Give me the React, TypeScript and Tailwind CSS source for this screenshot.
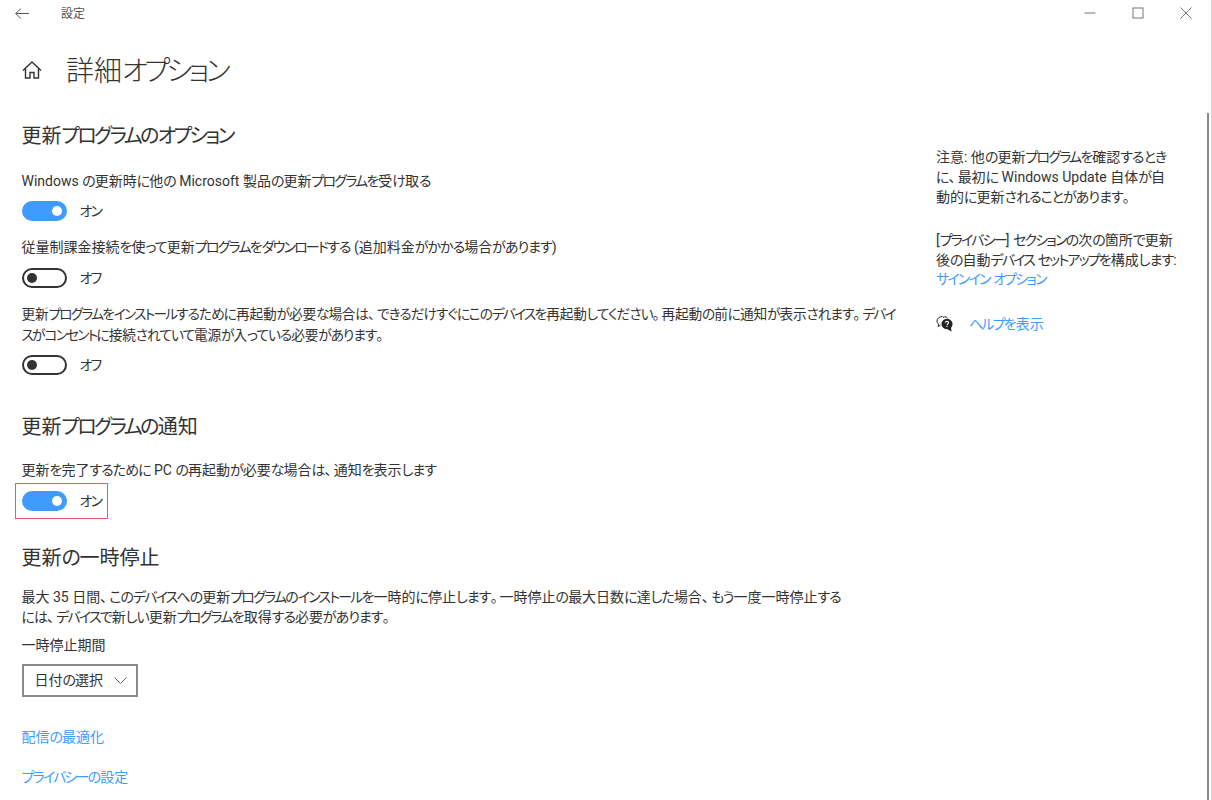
import { ReactNode } from "react";

const font = { fontFamily: 'Roboto, "Noto Sans CJK JP", sans-serif' };

// kana in the original font is narrower than Noto's, so each run gets its own tracking
function jp(text: string) {
  return text.split(/([ァ-ヶー]+|[ぁ-ん]+|[、。]+)/).map((run, i) => {
    if (/^[ァ-ヶー]/.test(run)) return <span key={i} className="tracking-[-0.13em]">{run}</span>;
    if (/^[ぁ-ん]/.test(run)) return <span key={i} className="tracking-[-0.07em]">{run}</span>;
    if (/^[、。]/.test(run)) return <span key={i} className="tracking-[0.15em]">{run}</span>;
    return run;
  });
}

function Toggle({ on, highlight }: { on: boolean; highlight?: boolean }) {
  return (
    <div className="relative flex h-[20px] items-center">
      {on ? (
        <div className="flex h-[20px] w-[45px] items-center justify-end rounded-full bg-[#3f9bff] pr-[5px]">
          <div className="h-[10px] w-[10px] rounded-full bg-white" />
        </div>
      ) : (
        <div className="flex h-[20px] w-[45px] items-center rounded-full border-2 border-[#333] pl-[3px]">
          <div className="h-[10px] w-[10px] rounded-full bg-[#333]" />
        </div>
      )}
      <span className="ml-[13px] text-[14px] leading-[20px] text-[#333]">{jp(on ? "オン" : "オフ")}</span>
      {highlight && (
        <div className="absolute left-[-7px] top-[-8px] h-[36px] w-[93px] border border-[#f0575c]" />
      )}
    </div>
  );
}

function Heading({ children, className }: { children: string; className: string }) {
  return <h2 className={`text-[20px] leading-[26px] text-[#333] ${className}`}>{jp(children)}</h2>;
}

function Label({ children, className }: { children: string; className: string }) {
  return <p className={`whitespace-pre-line text-[14px] leading-[20px] text-[#333] ${className}`}>{jp(children)}</p>;
}

function Link({ children, className }: { children: string; className: string }): ReactNode {
  return <p className={`text-[14px] leading-[20px] text-[#3f9bff] ${className}`}>{jp(children)}</p>;
}

export default function App() {
  return (
    <div className="h-[800px] w-[1212px] overflow-hidden border-r border-[#d4d4d4] bg-white [font-feature-settings:'palt']" style={font}>
      {/* title bar */}
      <div className="flex h-[26px] items-center text-[#666]">
        <svg className="ml-[15px] h-[11px] w-[14px]" viewBox="0 0 14 11" fill="none" stroke="#555" strokeWidth="1">
          <path d="M0.8 5.5H14M5.8 0.5L0.8 5.5L5.8 10.5" />
        </svg>
        <span className="ml-[32px] mt-[1px] text-[12px] text-[#555]">設定</span>
        <div className="ml-auto flex items-center">
          <svg className="h-[12px] w-[12px]" viewBox="0 0 12 12" stroke="#777" strokeWidth="1">
            <path d="M0.5 6H11.5" />
          </svg>
          <svg className="ml-[36px] h-[12px] w-[12px]" viewBox="0 0 12 12" fill="none" stroke="#777" strokeWidth="1">
            <rect x="1" y="1" width="10" height="10" />
          </svg>
          <svg className="ml-[36px] mr-[19px] h-[12px] w-[12px]" viewBox="0 0 12 12" stroke="#777" strokeWidth="1">
            <path d="M0.5 0.5L11.5 11.5M11.5 0.5L0.5 11.5" />
          </svg>
        </div>
      </div>

      {/* page title */}
      <div className="mt-[27px] flex h-[34px] items-center">
        <svg className="ml-[22px] h-[20px] w-[20px]" viewBox="0 0 20 20" fill="none" stroke="#333" strokeWidth="1.4">
          <path d="M1 10.5L10 2L19 10.5M3.5 8.5V18H8V12.5H12V18H16.5V8.5" />
        </svg>
        <h1 className="ml-[24px] mt-[4px] text-[28px] font-light leading-[34px] text-[#333]">{jp("詳細オプション")}</h1>
      </div>

      <div className="flex">
        {/* left column */}
        <div className="w-[936px] pl-[21.5px]">
          <Heading className="mt-[36px]">更新プログラムのオプション</Heading>
          <Label className="mt-[22px]">Windows の更新時に他の Microsoft 製品の更新プログラムを受け取る</Label>
          <div className="mt-[10px]"><Toggle on /></div>
          <Label className="mt-[16px]">従量制課金接続を使って更新プログラムをダウンロードする (追加料金がかかる場合があります)</Label>
          <div className="mt-[11px]"><Toggle on={false} /></div>
          <p className="mt-[16px] whitespace-pre-line text-[13.7px] leading-[21px] tracking-[-0.2px] text-[#333]">
            {jp("更新プログラムをインストールするために再起動が必要な場合は、できるだけすぐにこのデバイスを再起動してください。再起動の前に通知が表示されます。デバイ\nスがコンセントに接続されていて電源が入っている必要があります。")}
          </p>
          <div className="mt-[9px]"><Toggle on={false} /></div>
          <Heading className="mt-[39px]">更新プログラムの通知</Heading>
          <Label className="mt-[20px]">更新を完了するために PC の再起動が必要な場合は、通知を表示します</Label>
          <div className="mt-[11px]"><Toggle on highlight /></div>
          <Heading className="mt-[34px]">更新の一時停止</Heading>
          <Label className="mt-[16px]">
            {"最大 35 日間、このデバイスへの更新プログラムのインストールを一時的に停止します。一時停止の最大日数に達した場合、もう一度一時停止する\nには、デバイスで新しい更新プログラムを取得する必要があります。"}
          </Label>
          <Label className="mt-[8px]">一時停止期間</Label>
          <button className="mt-[9px] flex h-[33px] w-[116px] items-center border-2 border-[#8a8a8a] pl-[11px] text-[14px] text-[#333]">
            {jp("日付の選択")}
            <svg className="ml-[11px] h-[7px] w-[13px]" viewBox="0 0 13 7" fill="none" stroke="#666" strokeWidth="1">
              <path d="M0.5 0.5L6.5 6.5L12.5 0.5" />
            </svg>
          </button>
          <Link className="mt-[30px]">配信の最適化</Link>
          <Link className="mt-[20px]">プライバシーの設定</Link>
        </div>

        {/* right column */}
        <div className="w-[271px] text-[14px] leading-[20px] text-[#333]">
          <Label className="mt-[60px]">
            {"注意: 他の更新プログラムを確認するとき\nに、最初に Windows Update 自体が自\n動的に更新されることがあります。"}
          </Label>
          <Label className="mt-[23px]">
            {"[プライバシー] セクションの次の箇所で更新\n後の自動デバイス セットアップを構成します:"}
          </Label>
          <Link className="-mt-[1px]">サインイン オプション</Link>
          <div className="mt-[25px] flex h-[20px] items-center">
            <svg className="h-[18px] w-[18px]" viewBox="0 0 18 18">
              <path d="M6.5 1.5C3.5 1.5 1 3.5 1 6C1 7.3 1.6 8.4 2.6 9.2L2.2 11.5L4.5 10.3" fill="none" stroke="#222" strokeWidth="1" />
              <path d="M7 2.5C9 1 11 2 11.5 3.5" fill="none" stroke="#222" strokeWidth="1" />
              <path d="M11 4C7.8 4 5.5 6.1 5.5 9C5.5 11.9 7.8 14 11 14L15.5 16.5L15 12.7C16 11.8 16.5 10.5 16.5 9C16.5 6.1 14.2 4 11 4Z" fill="#222" />
              <path d="M9.4 7.8C9.4 6.9 10.1 6.4 11 6.4C11.9 6.4 12.6 6.9 12.6 7.7C12.6 8.8 11 8.9 11 10.2M11 11V12" fill="none" stroke="#fff" strokeWidth="1.1" />
            </svg>
            <span className="ml-[15px] text-[#3f9bff]">{jp("ヘルプを表示")}</span>
          </div>
        </div>

        {/* scrollbar */}
        <div className="mt-[26px] h-[700px] w-[2px] shrink-0 bg-[#8a8a8a]" />
      </div>
    </div>
  );
}
